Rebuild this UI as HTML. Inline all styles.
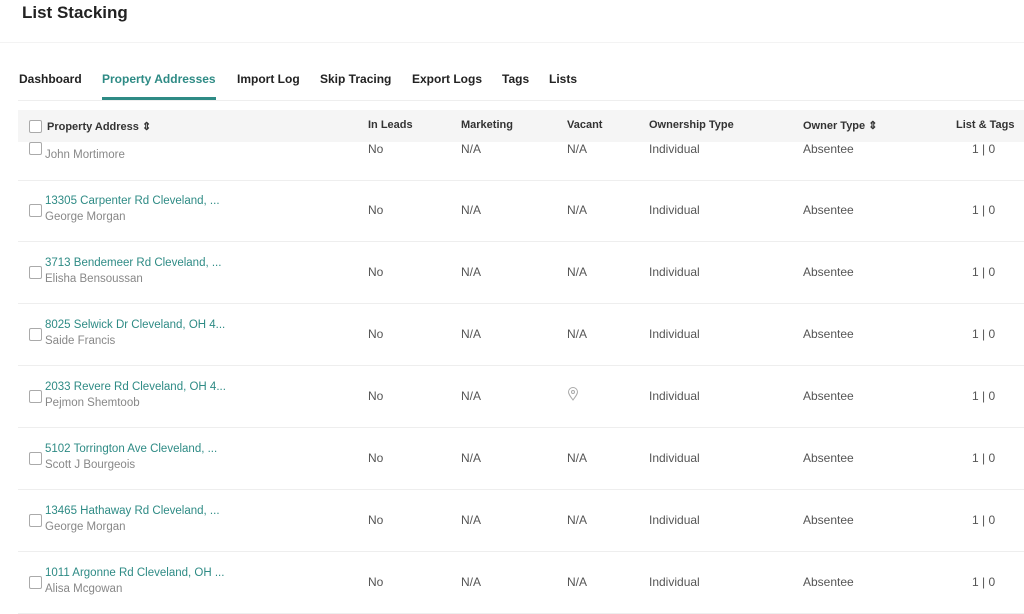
<!DOCTYPE html>
<html><head><style>
body{margin:0;width:1024px;height:614px;overflow:hidden;background:#fff;font-family:"Liberation Sans",sans-serif;position:relative}
.a{position:absolute;white-space:nowrap}
.t{font-size:12px;color:#222;font-weight:bold}
.h{font-size:11px;color:#333;font-weight:bold}
.d{font-size:12px;color:#555}
.cb{position:absolute;width:11px;height:11px;border:1px solid #aaa;border-radius:2px;background:#fff}
.sep{position:absolute;left:18px;right:0;height:1px;background:#eee}
.link{font-size:11.5px;color:#2e8b85}
.nm{font-size:11.5px;color:#888}
</style></head><body>
<div class="a" style="left:22px;top:3px;font-size:17px;color:#222;font-weight:bold">List Stacking</div>
<div class="a" style="left:0;top:42px;width:1024px;height:1px;background:#f3f3f3"></div>
<div class="a t" style="left:19px;top:72px">Dashboard</div>
<div class="a t" style="left:102px;top:72px;color:#2e8b85">Property Addresses</div>
<div class="a" style="left:102px;top:97px;width:114px;height:3px;background:#2e8b85"></div>
<div class="a t" style="left:237px;top:72px">Import Log</div>
<div class="a t" style="left:320px;top:72px">Skip Tracing</div>
<div class="a t" style="left:412px;top:72px">Export Logs</div>
<div class="a t" style="left:502px;top:72px">Tags</div>
<div class="a t" style="left:549px;top:72px">Lists</div>
<div class="a" style="left:18px;top:100px;width:1006px;height:1px;background:#eee"></div>
<div class="a" style="left:18px;top:110px;width:1006px;height:32px;background:#f5f5f5;z-index:2"></div>
<div style="position:absolute;z-index:3;left:0;top:0">
<div class="cb" style="left:29px;top:120px"></div>
<div class="a h" style="left:47px;top:120px">Property Address ⇕</div>
<div class="a h" style="left:368px;top:119px">In Leads</div>
<div class="a h" style="left:461px;top:119px">Marketing</div>
<div class="a h" style="left:567px;top:119px">Vacant</div>
<div class="a h" style="left:649px;top:119px">Ownership Type</div>
<div class="a h" style="left:803px;top:119px">Owner Type ⇕</div>
<div class="a h" style="left:956px;top:119px">List &amp; Tags</div>
</div>
<div class="cb" style="left:29px;top:142px"></div>
<div class="a nm" style="left:45px;top:149px">John Mortimore</div>
<div class="a d" style="left:368px;top:142px">No</div>
<div class="a d" style="left:461px;top:142px">N/A</div>
<div class="a d" style="left:567px;top:142px">N/A</div>
<div class="a d" style="left:649px;top:142px">Individual</div>
<div class="a d" style="left:803px;top:142px">Absentee</div>
<div class="a d" style="left:972px;top:142px">1 | 0</div>
<div class="sep" style="top:180px"></div>
<script>
var rows=[["13305 Carpenter Rd Cleveland, ...","George Morgan"],["3713 Bendemeer Rd Cleveland, ...","Elisha Bensoussan"],["8025 Selwick Dr Cleveland, OH 4...","Saide Francis"],["2033 Revere Rd Cleveland, OH 4...","Pejmon Shemtoob"],["5102 Torrington Ave Cleveland, ...","Scott J Bourgeois"],["13465 Hathaway Rd Cleveland, ...","George Morgan"],["1011 Argonne Rd Cleveland, OH ...","Alisa Mcgowan"]];
var h="";rows.forEach(function(r,i){var y=195+i*62;
h+='<div class="a link" style="left:45px;top:'+y+'px">'+r[0]+'</div><div class="a nm" style="left:45px;top:'+(y+16)+'px">'+r[1]+'</div><div class="cb" style="left:29px;top:'+(y+9)+'px"></div>';
var cy=y+8;
h+='<div class="a d" style="left:368px;top:'+cy+'px">No</div><div class="a d" style="left:461px;top:'+cy+'px">N/A</div>';
h+= i==3?'<svg class="a" style="left:567px;top:'+(cy-2)+'px" width="12" height="14" viewBox="0 0 12 14"><path d="M6 13C3 9 1.5 7 1.5 5a4.5 4.5 0 0 1 9 0c0 2-1.5 4-4.5 8z" fill="none" stroke="#aaa"/><circle cx="6" cy="5" r="1.5" fill="none" stroke="#aaa"/></svg>':'<div class="a d" style="left:567px;top:'+cy+'px">N/A</div>';
h+='<div class="a d" style="left:649px;top:'+cy+'px">Individual</div><div class="a d" style="left:803px;top:'+cy+'px">Absentee</div><div class="a d" style="left:972px;top:'+cy+'px">1 | 0</div>';
h+='<div class="sep" style="top:'+(y+46)+'px"></div>';});
document.write(h);
</script>
</body></html>
